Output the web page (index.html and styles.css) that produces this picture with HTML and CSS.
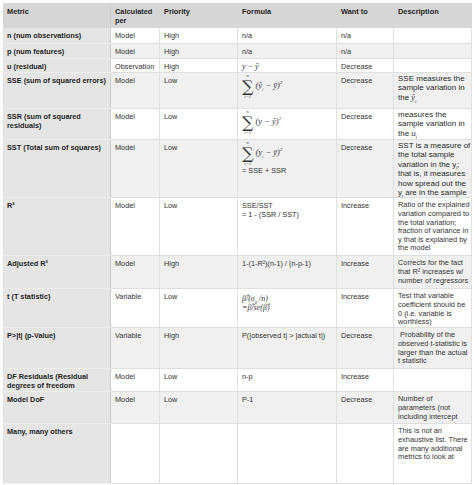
FILE: index.html
```html
<!DOCTYPE html>
<html>
<head>
<meta charset="utf-8">
<link rel="stylesheet" href="styles.css">
</head>
<body>
<table class="metrics">
  <colgroup>
    <col class="c-metric"><col class="c-calc"><col class="c-prio"><col class="c-form"><col class="c-want"><col class="c-desc">
  </colgroup>
  <thead>
    <tr class="r-head">
      <th>Metric</th><th>Calculated per</th><th>Priority</th><th>Formula</th><th>Want to</th><th>Description</th>
    </tr>
  </thead>
  <tbody>
    <tr class="r-n"><td>n (num observations)</td><td>Model</td><td>High</td><td>n/a</td><td>n/a</td><td></td></tr>
    <tr class="r-p alt"><td>p (num features)</td><td>Model</td><td>High</td><td>n/a</td><td>n/a</td><td></td></tr>
    <tr class="r-u"><td>u (residual)</td><td>Observation</td><td>High</td><td><span class="math">y − ŷ</span></td><td>Decrease</td><td></td></tr>
    <tr class="r-sse alt"><td>SSE (sum of squared errors)</td><td>Model</td><td>Low</td>
      <td class="formula"><div class="sumrow"><span class="sum"><span class="lim">n</span><span class="sig">∑</span><span class="lim">i=1</span></span><span class="expr">(ŷ<sub>i</sub> − ȳ)<sup>2</sup></span></div></td>
      <td>Decrease</td><td class="big">SSE measures the sample variation in the <span class="math">ŷ<sub>i</sub></span></td></tr>
    <tr class="r-ssr"><td>SSR (sum of squared residuals)</td><td>Model</td><td>Low</td>
      <td class="formula"><div class="sumrow"><span class="sum"><span class="lim">n</span><span class="sig">∑</span><span class="lim">i=1</span></span><span class="expr">(y − ŷ)<sup>2</sup></span></div></td>
      <td>Decrease</td><td class="big">measures the sample variation in the u<sub>i</sub></td></tr>
    <tr class="r-sst alt"><td>SST (Total sum of squares)</td><td>Model</td><td>Low</td>
      <td class="formula"><div class="sumrow"><span class="sum"><span class="lim">n</span><span class="sig">∑</span><span class="lim">i=1</span></span><span class="expr">(y<sub>i</sub> − ȳ)<sup>2</sup></span></div><div class="eq">= SSE + SSR</div></td>
      <td>Decrease</td><td class="big">SST is a measure of the total sample variation in the y<sub>i</sub>; that is, it measures how spread out the y<sub>i</sub> are in the sample</td></tr>
    <tr class="r-r2"><td>R²</td><td>Model</td><td>Low</td><td>SSE/SST<br>= 1 - (SSR / SST)</td><td>Increase</td><td class="small">Ratio of the explained variation compared to the total variation; fraction of variance in y that is explained by the model</td></tr>
    <tr class="r-adj alt"><td>Adjusted R²</td><td>Model</td><td>High</td><td>1-(1-R²)(n-1) / (n-p-1)</td><td>Increase</td><td class="small">Corrects for the fact that R² increases w/ number of regressors</td></tr>
    <tr class="r-t"><td>t (T statistic)</td><td>Variable</td><td>Low</td><td class="tform"><div class="math">β̂/(σ<sub>β̂</sub> /n)</div><div class="math">=β̂/se(β̂)</div></td><td>Increase</td><td class="small">Test that variable coefficient should be 0 (i.e. variable is worthless)</td></tr>
    <tr class="r-pv alt"><td>P&gt;|t| (p-Value)</td><td>Variable</td><td>High</td><td>P(|observed t| &gt; |actual t|)</td><td>Decrease</td><td class="small">&nbsp;Probability of the observed t-statistic is larger than the actual t statistic</td></tr>
    <tr class="r-df"><td>DF Residuals (Residual degrees of freedom</td><td>Model</td><td>Low</td><td>n-p</td><td>Increase</td><td></td></tr>
    <tr class="r-dof alt"><td>Model DoF</td><td>Model</td><td>Low</td><td>P-1</td><td>Decrease</td><td class="small">Number of parameters (not including intercept</td></tr>
    <tr class="r-many"><td>Many, many others</td><td></td><td></td><td></td><td></td><td class="small">This is not an exhaustive list. There are many additional metrics to look at</td></tr>
  </tbody>
</table>
</body>
</html>
```

FILE: styles.css
```css
html, body {
  margin: 0;
  padding: 0;
  background: #ffffff;
}
body {
  padding: 3px 0 0 3px;
  font-family: "Liberation Sans", Arial, sans-serif;
  font-size: 7.3px;
  color: #333;
}
.metrics {
  border-collapse: collapse;
  table-layout: fixed;
  width: 468px;
}
.c-metric { width: 107px; }
.c-calc { width: 49px; }
.c-prio { width: 78px; }
.c-form { width: 99px; }
.c-want { width: 57px; }
.c-desc { width: 78px; }

.metrics th, .metrics td {
  vertical-align: top;
  text-align: left;
  padding: 3px 3px 0 3px;
  line-height: 9px;
  border: 1px solid #e0e0e0;
  overflow: visible;
}
.metrics th {
  background: #d6d6d6;
  font-weight: bold;
  font-size: 7.4px;
  border-color: #d6d6d6;
  color: #1e1e1e;
  padding-left: 4px;
}
.metrics th:first-child {
  padding-left: 3px;
  border-right: 1px solid #cdcdcd;
}
.metrics td:first-child {
  background: #e5e5e5;
  font-weight: bold;
  color: #1e1e1e;
  border-top-color: #eeeeee;
  border-bottom-color: #eeeeee;
  border-right: 1px solid #cdcdcd;
}
.metrics td:nth-child(n+2) {
  padding-left: 4px;
}
.metrics tr.alt td {
  background: #f0f0f0;
}
.metrics tr.alt td:first-child {
  background: #e5e5e5;
}
.metrics td.small {
  font-size: 7.4px;
  line-height: 8.6px;
  padding-right: 0;
}
.metrics td.big {
  font-size: 8px;
  line-height: 9.4px;
  padding-top: 1px;
  padding-right: 0;
  color: #2a2a2a;
}
sub, sup {
  font-size: 4.5px;
  line-height: 0;
}
.math {
  font-family: "Liberation Serif", "Times New Roman", serif;
  font-style: italic;
  font-size: 8px;
}
.metrics td.formula {
  padding-top: 0;
}
.sumrow {
  display: flex;
  align-items: center;
}
.sum {
  display: flex;
  flex-direction: column;
  align-items: center;
  margin-right: 2px;
  font-family: "DejaVu Serif", "Liberation Serif", serif;
}
.sum .lim {
  font-family: "Liberation Serif", serif;
  font-size: 4.6px;
  line-height: 6px;
  font-style: italic;
}
.sum .sig {
  font-size: 16px;
  line-height: 15px;
}
.expr {
  font-family: "Liberation Serif", "Times New Roman", serif;
  font-style: italic;
  font-size: 8.5px;
  padding-bottom: 3px;
}
.eq {
  margin-top: -1px;
}
.metrics td.tform {
  padding-top: 5px;
  line-height: 9px;
}
.r-head { height: 24px; }
.r-n { height: 16px; }
.r-p { height: 15px; }
.r-u { height: 14px; }
.r-sse { height: 36px; }
.r-ssr { height: 31px; }
.r-sst { height: 57px; }
.r-r2 { height: 58px; }
.r-adj { height: 33px; }
.r-t { height: 39px; }
.r-pv { height: 41px; }
.r-df { height: 23px; }
.r-dof { height: 32px; }
.r-many { height: 60px; }
```
